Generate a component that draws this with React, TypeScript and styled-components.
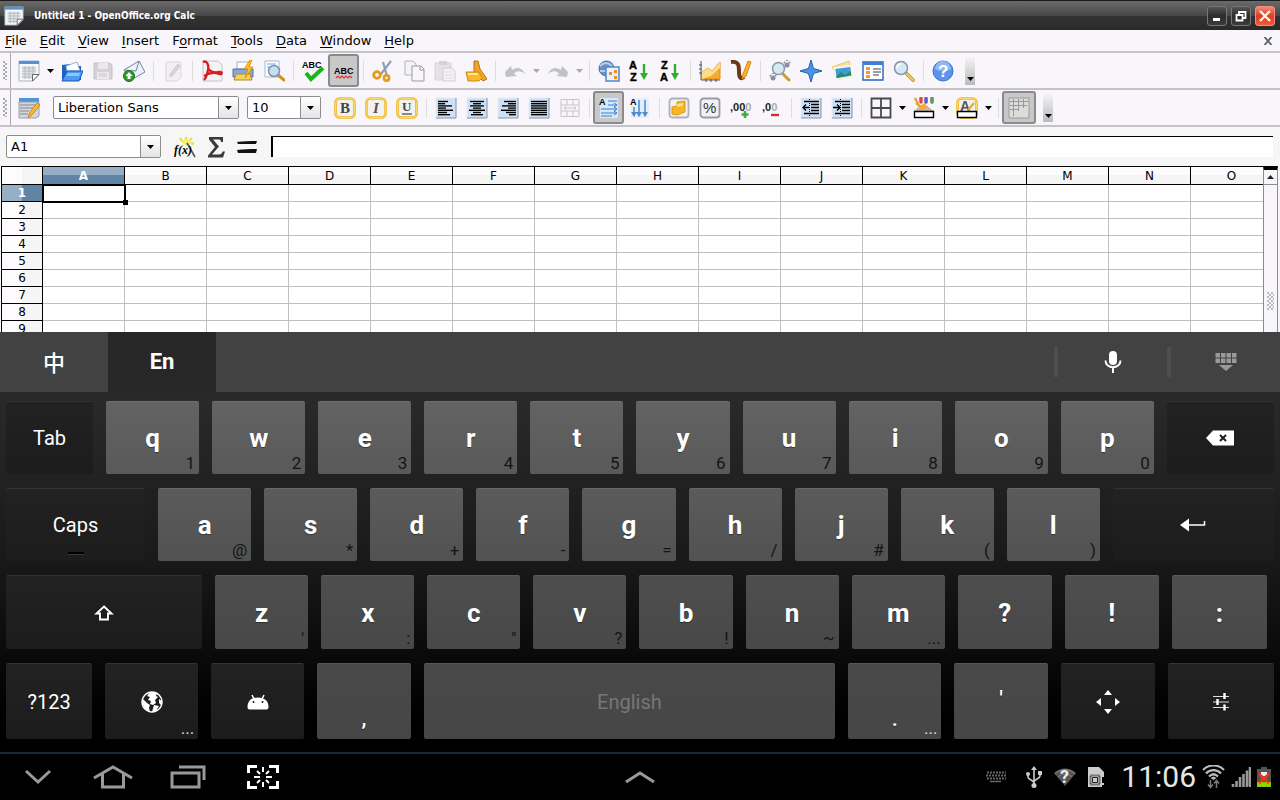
import React from "react";
import styled, { createGlobalStyle, css } from "styled-components";

const uiFont = `"DejaVu Sans", "Liberation Sans", sans-serif`;
const keyFont = `Roboto, "Noto Sans CJK SC", sans-serif`;

const GlobalStyle = createGlobalStyle`
  * { box-sizing: border-box; }
  body { margin: 0; background: #000; }
  button, input, select { font: inherit; color: inherit; margin: 0; }
  button { border: 0; padding: 0; background: none; }
  svg { display: block; flex: none; }
`;

const Screen = styled.div`
  display: flex;
  flex-direction: column;
  height: 100vh;
  overflow: hidden;
  font-family: ${uiFont};
  font-size: 13px;
  color: #000;
  background: #f8f6fa;
`;

/* ---------- window frame ---------- */

const TitleBar = styled.header`
  display: flex;
  align-items: center;
  gap: 10px;
  height: 30px;
  padding: 0 5px 0 4px;
  border-top: 1px solid #1a1a1a;
  background: linear-gradient(#6a6a6a, #484848 50%, #333 52%, #2a2a2a);
  flex: none;
`;

const Title = styled.h1`
  flex: 1;
  margin: 0;
  font-family: "DejaVu Sans Condensed", "DejaVu Sans", sans-serif;
  font-size: 10px;
  font-weight: bold;
  color: #fff;
`;

const WindowButtons = styled.div`
  display: flex;
  gap: 4px;
`;

const WindowButton = styled.button<{ $close?: boolean }>`
  display: grid;
  place-items: center;
  width: 20px;
  height: 20px;
  border: 1px solid ${(p) => (p.$close ? "#f2907f" : "#777")};
  border-radius: 3px;
  background: ${(p) =>
    p.$close ? "linear-gradient(#f08a78, #e03a22 50%, #ee5a3c)" : "linear-gradient(#555, #2c2c2c 50%, #3a3a3a)"};
`;

const MenuBar = styled.nav`
  display: flex;
  align-items: center;
  gap: 13px;
  height: 23px;
  padding: 0 7px 0 5px;
  border-bottom: 2px solid #c4c2c4;
  flex: none;
`;

const MenuItem = styled.button`
  line-height: 20px;
`;

const Accel = styled.u`
  text-underline-offset: 2px;
`;

const CloseDocument = styled.button`
  margin-left: auto;
`;

/* ---------- toolbars ---------- */

const Toolbar = styled.div`
  display: flex;
  align-items: center;
  height: 37px;
  border-bottom: 2px solid #c4c2c4;
  flex: none;
`;

const Grip = styled.span`
  align-self: stretch;
  width: 11px;
  margin-right: 2px;
  padding: 8px 3px;
  border-right: 1px solid #aaa;

  &::before {
    content: "";
    display: block;
    height: 100%;
    background:
      radial-gradient(circle at 1px 1px, #aaa 1px, transparent 1px) 0 0 / 4px 4px,
      radial-gradient(circle at 1px 1px, #aaa 1px, transparent 1px) 2px 2px / 4px 4px;
  }
`;

const ToolButton = styled.button<{ $pressed?: boolean; $wide?: boolean }>`
  display: grid;
  place-items: center;
  width: ${(p) => (p.$wide ? 34 : 31)}px;
  height: 33px;
  border-radius: 3px;
  flex: none;
  ${(p) =>
    p.$pressed &&
    css`
      border: 2px solid #8a8a8a;
      background: #c8c8c8;
    `}
`;

const DropArrow = styled.button`
  display: grid;
  place-items: center;
  width: 12px;
  height: 30px;
  flex: none;
`;

const Separator = styled.span`
  width: 1px;
  height: 20px;
  margin: 0 3px 0 4px;
  background: #dedcde;
  flex: none;
`;

const Overflow = styled.button`
  display: flex;
  align-items: flex-end;
  justify-content: center;
  width: 10px;
  height: 28px;
  margin-left: 7px;
  padding-bottom: 4px;
  background: linear-gradient(#f4f2f4, #bbb);
  flex: none;
`;

const ComboBox = styled.label<{ $width: number }>`
  position: relative;
  display: flex;
  width: ${(p) => p.$width}px;
  height: 23px;
  margin-right: 8px;
  border: 1px solid #8c8c8c;
  border-radius: 2px;
  background: #fff;
  flex: none;

  select {
    width: 100%;
    padding: 0 22px 0 4px;
    border: 0;
    outline: 0;
    appearance: none;
    background: transparent;
  }
`;

const ComboArrow = styled.span`
  position: absolute;
  top: 0;
  right: 0;
  bottom: 0;
  display: grid;
  place-items: center;
  width: 20px;
  border-left: 1px solid #8c8c8c;
  background: linear-gradient(#fff, #e4e4e4);
  pointer-events: none;
`;

const FontBoxes = styled.div`
  display: flex;
  padding-left: 9px;
`;

const FormulaBar = styled.div`
  display: flex;
  align-items: center;
  height: 39px;
  padding: 0 7px 0 6px;
  background: #f6f6f7;
  flex: none;
`;

const FormulaInput = styled.input`
  flex: 1;
  min-width: 0;
  height: 21px;
  margin-left: 9px;
  padding: 0 4px;
  border: 0;
  border-top: 1px solid #000;
  border-left: 2px solid #000;
  background: #fff;
  outline: 0;
`;

/* ---------- sheet ---------- */

const SheetArea = styled.main`
  display: flex;
  flex: 1;
  min-height: 0;
  padding: 0 2px 0 1px;
  background: #f6f6f7;
`;

const SheetClip = styled.div`
  flex: 1;
  min-width: 0;
  overflow: hidden;
  border-top: 1px solid #000;
  border-left: 1px solid #000;
  background: #fff;
`;

const Sheet = styled.table`
  width: 1271px;
  table-layout: fixed;
  border-spacing: 0;
  font-size: 12px;
  line-height: 16px;

  th, td { padding: 0; height: 17px; }
  thead th { height: 18px; }
`;

const HeadCell = styled.th<{ $active?: boolean; $row?: boolean }>`
  width: ${(p) => (p.$row ? 41 : 82)}px;
  border-right: 1px solid #000;
  border-bottom: 1px solid #000;
  font-weight: ${(p) => (p.$active ? "bold" : "normal")};
  color: ${(p) => (p.$active ? "#fff" : "#000")};
  background: ${(p) =>
    p.$active
      ? `linear-gradient(${p.$row ? "to right" : "to bottom"}, #97afc5 50%, #5f84a4 50%)`
      : `linear-gradient(${p.$row ? "to right" : "to bottom"}, #fdfbfd 50%, #f5f5f5 50%)`};
`;

const Cell = styled.td<{ $selected?: boolean }>`
  border-right: 1px solid #c0c0c0;
  border-bottom: 1px solid #c0c0c0;
  ${(p) =>
    p.$selected &&
    css`
      position: relative;
      z-index: 1;
      outline: 2px solid #000;
      outline-offset: -1px;

      &::after {
        content: "";
        position: absolute;
        right: -4px;
        bottom: -4px;
        width: 5px;
        height: 5px;
        background: #000;
      }
    `}
`;

const ScrollBar = styled.div`
  display: flex;
  flex-direction: column;
  width: 15px;
  border: 1px solid #8c8c8c;
  border-top: 4px solid #000;
  border-bottom: 0;
  background: #f8f6fa;
`;

const ScrollUp = styled.button`
  display: grid;
  place-items: center;
  height: 15px;
  border-bottom: 1px solid #8c8c8c;
`;

const ScrollGrip = styled.span`
  width: 7px;
  height: 18px;
  margin: auto auto 22px;
  background:
    radial-gradient(circle at 1px 1px, #bbb 1px, transparent 1px) 0 0 / 4px 4px,
    radial-gradient(circle at 1px 1px, #bbb 1px, transparent 1px) 2px 2px / 4px 4px;
`;

/* ---------- on-screen keyboard ---------- */

const Keyboard = styled.section`
  font-family: ${keyFont};
  color: #fff;
  flex: none;
`;

const CandidateBar = styled.div`
  display: flex;
  height: 60px;
  background: #424242;
`;

const LanguageTab = styled.button<{ $active?: boolean }>`
  width: 108px;
  padding-bottom: 2px;
  font-size: 22px;
  font-weight: ${(p) => (p.$active ? 700 : 500)};
  background: ${(p) => (p.$active ? "#272727" : "transparent")};
`;

const BarActions = styled.div`
  display: flex;
  margin-left: auto;
`;

const BarAction = styled.button`
  display: flex;
  align-items: center;
  width: 113px;

  &::before {
    content: "";
    width: 4px;
    height: 30px;
    background: #4e4e4e;
  }

  svg { margin: 0 auto; }
`;

const KeyRows = styled.div`
  display: flex;
  flex-direction: column;
  gap: 14px;
  padding: 9px 6px 13px 6px;
  background: linear-gradient(#2a2a2a, #1a1a1a 45%, #000 90%);
`;

const KeyRow = styled.div<{ $height: number; $inset?: boolean }>`
  display: flex;
  gap: 13px;
  height: ${(p) => p.$height}px;
  padding-right: ${(p) => (p.$inset ? 7 : 0)}px;
`;

const tones = [
  ["#636363", "#595959", "#707070"],
  ["#5b5b5b", "#525252", "#686868"],
  ["#4e4e4e", "#484848", "#5a5a5a"],
  ["#494949", "#464646", "#585858"],
];

const KeyCap = styled.button<{ $weight: number; $tone: number; $dark?: boolean; $small?: boolean }>`
  position: relative;
  display: flex;
  align-items: center;
  justify-content: center;
  flex: ${(p) => p.$weight} 1 0;
  min-width: 0;
  border-top: 1px solid ${(p) => (p.$dark ? "#333" : tones[p.$tone][2])};
  border-radius: 2px;
  background: ${(p) =>
    p.$dark ? "linear-gradient(#222, #1c1c1c)" : `linear-gradient(${tones[p.$tone][0]}, ${tones[p.$tone][1]})`};
  font-size: ${(p) => (p.$small ? 20 : 26)}px;
  font-weight: ${(p) => (p.$small ? 400 : 700)};
  text-shadow: ${(p) => (p.$dark ? "none" : "0 1px 1px rgba(0, 0, 0, 0.4)")};
`;

const Hint = styled.span<{ $light?: boolean }>`
  position: absolute;
  right: 4px;
  bottom: 1px;
  font-size: 17px;
  font-weight: 400;
  line-height: 20px;
  color: ${(p) => (p.$light ? "#ddd" : "#141414")};
  text-shadow: none;
`;

const LowMark = styled.span`
  align-self: flex-end;
  font-size: 22px;
  line-height: 40px;
  font-weight: 500;
`;

const HighMark = styled.span`
  padding-bottom: 6px;
  font-size: 22px;
  font-weight: 500;
`;

const SpaceLabel = styled.span`
  color: #777;
  text-shadow: none;
`;

const CapsLight = styled.span`
  position: absolute;
  left: 50%;
  bottom: 6px;
  width: 16px;
  height: 3px;
  margin-left: -8px;
  border-bottom: 1px solid #3a3a3a;
  background: #000;
`;

/* ---------- system bar ---------- */

const SystemBar = styled.footer`
  display: grid;
  grid-template-columns: 1fr auto 1fr;
  align-items: center;
  height: 48px;
  border-top: 2px solid #182838;
  background: #000;
  flex: none;
`;

const NavButtons = styled.div`
  display: flex;
`;

const NavButton = styled.button`
  display: grid;
  place-items: center;
  width: 75px;
  height: 46px;
`;

const Status = styled.div`
  display: flex;
  align-items: center;
  justify-content: flex-end;
  gap: 12px;
  padding-right: 9px;
`;

const StatusGroup = styled.div`
  display: flex;
  align-items: center;
  gap: 6px;
  margin-left: 4px;
`;

const KeyboardNotice = styled.span`
  margin-right: 8px;
`;

const Clock = styled.time`
  font-family: ${keyFont};
  font-size: 30px;
  line-height: 36px;
  color: #e6e6e6;
`;

/* ---------- icons ---------- */

const sansText = { fontFamily: "Liberation Sans, sans-serif", fontWeight: 700 };
const serifText = { fontFamily: "Liberation Serif, serif", fontWeight: 700 };

const Down = ({ color = "#000" }: { color?: string }) => (
  <svg width="7" height="4" viewBox="0 0 7 4"><path d="M0 0h7L3.5 4z" fill={color} /></svg>
);

const sheetOf = (lines: number[][]) => (
  <>
    <rect x="1" y="1" width="20" height="20" fill="#cfe0f4" />
    <path d="M1 21V1h20" fill="none" stroke="#e4edf8" />
    <path d="M21 1v20H1" fill="none" stroke="#7f93ad" />
    {lines.map(([a, b], i) => (
      <path key={i} d={`M${a} ${4.5 + i * 2.2}H${b}`} stroke="#000" strokeWidth="1.4" />
    ))}
  </>
);

const goldFrame = (
  <>
    <rect x="1.5" y="1.5" width="19" height="19" rx="4" fill="#f3f1ee" stroke="#efb52a" strokeWidth="2.6" />
    <rect x="1.5" y="1.5" width="19" height="19" rx="4" fill="none" stroke="#fbdc6a" strokeWidth="1" />
  </>
);

const icons: Record<string, React.ReactNode> = {
  calc: (
    <>
      <path d="M1 1h20v14l-6 6H1z" fill="#f6f8fa" stroke="#a9b4be" />
      <path d="M1 1h20v3H1z" fill="#4f93dc" />
      <path d="M4 6.500h14v12H4z" fill="#e2e5e8" />
      <path d="M4 8h14M4 11h14M4 14h11M4 17h10M7 6v13M11 6v13M15 6v9" stroke="#b4bcc4" fill="none" />
      <path d="M14.500 21v-6.500H21z" fill="#fff" stroke="#666" />
    </>
  ),
  open: (
    <>
      <path d="M1 5l8-1 2 2h9v14H1z" fill="#1c63c8" />
      <path d="M5 6l11-4 3 9H6z" fill="#fff" stroke="#8fb0d8" />
      <path d="M1 21l5-10h16l-4 10z" fill="#4b9af2" stroke="#1b56b4" />
      <path d="M7 13h12l-1 3H5z" fill="#8cc4fb" />
    </>
  ),
  save: (
    <>
      <path d="M2 3h16l2 2v14H2z" fill="#d4d2d4" stroke="#c4c2c4" />
      <path d="M6 3h10v6H6zM5 12h12v7H5z" fill="#ebe9eb" />
      <path d="M7 14h8M7 16h8" stroke="#c8c6c8" />
    </>
  ),
  mail: (
    <>
      <path d="M1 10L16 1l6 11-14 8z" fill="#edf1f8" stroke="#7085a6" />
      <path d="M1 10l12 1L16 1" fill="none" stroke="#7085a6" />
      <circle cx="6" cy="16" r="5.5" fill="#2f9a2a" stroke="#1c701b" />
      <path d="M6 12l3.5 4h-2v3h-3v-3h-2z" fill="#fff" />
    </>
  ),
  edit: (
    <>
      <path d="M4 2h15v15l-4 4H4z" fill="#f1eff1" stroke="#d9d7d9" />
      <path d="M8 17l1-4 7-9 2 2-7 9z" fill="#d8d6d8" stroke="#c8c6c8" />
    </>
  ),
  pdf: (
    <>
      <path d="M2 1h15l4 4v16H2z" fill="#f2f2f2" stroke="#c4c4c4" />
      <path d="M2 2c4-2 6 3 5 8-1 5-3 9-4 10M7 8c2 4 7 5 12 4 3 0 2 3-1 2-5-2-10-1-15 2" fill="none" stroke="#d81d22" strokeWidth="2.3" />
    </>
  ),
  print: (
    <>
      <path d="M5 9V2h12v7z" fill="#fff" stroke="#9bb0c8" />
      <path d="M1 9h20v8H1z" fill="#86a9d4" stroke="#51729e" />
      <path d="M4 14h14l2 6H2z" fill="#f4d25c" stroke="#a88a3a" />
      <path d="M18 0l-6 9h4l-3 9 8-11h-4l3-7z" fill="#ffc318" stroke="#dc8508" strokeWidth=".8" />
    </>
  ),
  preview: (
    <>
      <path d="M2 1h14v16H2z" fill="#fff" stroke="#9db8da" />
      <path d="M4 4h9M4 7h5" stroke="#7aa5de" />
      <path d="M15 15l6 5" stroke="#cf9322" strokeWidth="3" strokeLinecap="round" />
      <circle cx="11" cy="11" r="5.5" fill="#c4e0f0" stroke="#8191a4" strokeWidth="1.5" />
    </>
  ),
  spell: (
    <>
      <path d="M4 13l5 6L21 8" fill="none" stroke="#17b617" strokeWidth="4" />
      <text x="0" y="8" fontSize="9" style={sansText}>ABC</text>
    </>
  ),
  autospell: (
    <>
      <text x="1" y="14" fontSize="9" style={sansText}>ABC</text>
      <path d="M3 18l2-2 2 2 2-2 2 2 2-2 2 2 2-2 2 2" fill="none" stroke="#d33" strokeWidth="1.2" />
    </>
  ),
  cut: (
    <>
      <path d="M19 1L9 14M11 2l4 14" stroke="#8e9fb3" strokeWidth="2.2" />
      <circle cx="5" cy="15" r="3.3" fill="none" stroke="#e6981a" strokeWidth="2.8" />
      <circle cx="14.5" cy="18" r="2.6" fill="none" stroke="#e6981a" strokeWidth="2.6" />
    </>
  ),
  copy: (
    <>
      <path d="M2 1h8l3 3v11H2z" fill="#f4f2f4" stroke="#b4b4b4" />
      <path d="M9 6h9l3 3v12H9z" fill="#f8f6f8" stroke="#9c9c9c" />
      <path d="M17 6v4h4" fill="none" stroke="#9c9c9c" />
    </>
  ),
  paste: (
    <>
      <path d="M1 3h16v17H1z" fill="#e4e2e4" stroke="#d6d4d6" />
      <path d="M5 1h8v4H5z" fill="#d4d2d4" />
      <path d="M9 8h9l3 3v10H9z" fill="#f4f2f4" stroke="#cecccc" />
      <path d="M11 12h7M11 15h8M11 18h8" stroke="#dcdadc" />
    </>
  ),
  brush: (
    <>
      <path d="M9 1h4l2 8 7 10-4 2-9-9z" fill="#f2a429" stroke="#b87410" />
      <path d="M1 12h13l3 6-3 3H3z" fill="#f9b92d" stroke="#d38b12" />
      <path d="M3 14h10" stroke="#ffe69a" strokeWidth="2" />
    </>
  ),
  undo: <path d="M1 12l6-6 1 4c5-4 11-2 13 4-4-3-8-4-11 0l3 2-11 1z" fill="#c2c2c6" />,
  redo: <path d="M21 12l-6-6-1 4C9 6 3 8 1 14c4-3 8-4 11 0l-3 2 11 1z" fill="#c2c2c6" />,
  link: (
    <>
      <circle cx="8.5" cy="8.5" r="7.5" fill="#6d8fc4" stroke="#4b6a9c" />
      <path d="M2 6c4-4 8-4 12 0M2 11h6" stroke="#b5cdec" strokeWidth="2" fill="none" />
      <path d="M8 7h13v14H8z" fill="#e8f2fc" stroke="#4f88cc" strokeWidth="1.5" />
      <path d="M11 12h3v3h-3zM16 10h3v3h-3zM16 16h3v3h-3z" fill="#f08c24" />
    </>
  ),
  az: (
    <>
      <text x="0" y="9" fontSize="11" style={sansText} stroke="#000" strokeWidth=".4">A</text>
      <text x="1" y="21" fontSize="11" style={sansText} stroke="#000" strokeWidth=".4">Z</text>
      <path d="M15 4v11" stroke="#2fae2f" strokeWidth="2.4" /><path d="M11 13h8l-4 7z" fill="#2fae2f" />
    </>
  ),
  za: (
    <>
      <text x="1" y="9" fontSize="11" style={sansText} stroke="#000" strokeWidth=".4">Z</text>
      <text x="0" y="21" fontSize="11" style={sansText} stroke="#000" strokeWidth=".4">A</text>
      <path d="M15 4v11" stroke="#2fae2f" strokeWidth="2.4" /><path d="M11 13h8l-4 7z" fill="#2fae2f" />
    </>
  ),
  chart: (
    <>
      <path d="M3 19V12l6-4 4 3 8-9v17z" fill="#f9a92c" stroke="#e58f12" />
      <path d="M3 19V12l6-4 4 3 8-9v6l-9 8z" fill="#fddb8c" />
      <path d="M2 1v19h19M0 5h3M0 9h3M0 13h3M7 19v3M12 19v3M17 19v3" stroke="#555" fill="none" />
    </>
  ),
  draw: (
    <>
      <path d="M1 2c8-1 8 4 8 9 0 6 1 9 5 6" fill="none" stroke="#6a3a18" strokeWidth="4" />
      <path d="M12 19l1-5 5-13 3 1-5 14z" fill="#fbb52c" stroke="#d8830f" />
    </>
  ),
  find: (
    <>
      <circle cx="4" cy="18" r="2.5" fill="#8a8ea8" /><circle cx="18" cy="5" r="2.5" fill="#8a8ea8" />
      <path d="M1 15l1 1M4 13v1M7 15l-1 1M15 2l1 1M18 0v1M21 2l-1 1" stroke="#8a8ea8" strokeWidth="2" />
      <path d="M14 14l6 6" stroke="#d59a28" strokeWidth="3" strokeLinecap="round" />
      <circle cx="9.5" cy="8.5" r="6" fill="#d4eaf4" stroke="#8797a5" strokeWidth="1.5" />
    </>
  ),
  star: (
    <path d="M11 0l2.5 8.5L22 11l-8.5 2.5L11 22l-2.5-8.500L0 11l8.500-2.500z" fill="#4a94ea" stroke="#2260b0" />
  ),
  gallery: (
    <>
      <path d="M1 7L18 1l3 10-13 9z" fill="#fbe38c" stroke="#e0cc70" />
      <path d="M4 7h17v11H4z" fill="#3e9bdc" stroke="#f4f4f4" strokeWidth="2" transform="rotate(-8 12 13)" />
      <path d="M5 17l5-5 4 3 6-4v4l-14 3z" fill="#2f8a5a" />
    </>
  ),
  source: (
    <>
      <path d="M1 2h20v18H1z" fill="#fff" stroke="#2b62b8" strokeWidth="1.4" />
      <path d="M1 2h20v3H1z" fill="#3f7fd8" />
      <path d="M4 7h4v3H4zM4 11h4v3H4zM4 15h4v3H4z" fill="#f09a30" />
      <path d="M11 9h8M11 12h8M11 15h6" stroke="#345" />
    </>
  ),
  zoom: (
    <>
      <path d="M14 14l6 6" stroke="#c88a1a" strokeWidth="3.6" strokeLinecap="round" />
      <path d="M14 14l6 6" stroke="#f7cf5e" strokeWidth="1.8" strokeLinecap="round" />
      <circle cx="8" cy="8" r="6.5" fill="#d4eaf4" stroke="#8797a5" strokeWidth="1.5" />
      <path d="M4 8a4 4 0 0 1 4-4" fill="none" stroke="#fff" strokeWidth="1.6" />
    </>
  ),
  help: (
    <>
      <circle cx="11" cy="11" r="10" fill="#5b94ee" stroke="#3c6fc8" />
      <path d="M3 9a8 8 0 0 1 16 0c-5 3-11 3-16 0z" fill="#8db8f8" />
      <text x="6" y="17" fontSize="17" fill="#fff" style={sansText}>?</text>
    </>
  ),
  styles: (
    <>
      <path d="M1 1h20v4H1z" fill="#4f93dc" />
      <path d="M1 5h20v14l-3 2H1z" fill="#d4d8de" stroke="#98a0aa" />
      <path d="M2 8h17M2 11h15M2 14h9M2 17h8" stroke="#7c8590" />
      <path d="M10 21l2-6 7-9 3 2-8 10z" fill="#fbb832" stroke="#cf8a12" />
    </>
  ),
  bold: (<>{goldFrame}<text x="6" y="16" fontSize="15" fill="#444" style={serifText}>B</text></>),
  italic: (<>{goldFrame}<text x="8" y="16" fontSize="15" fill="#555" style={{ ...serifText, fontStyle: "italic" }}>I</text></>),
  underline: (<>{goldFrame}<text x="6" y="14" fontSize="13" fill="#444" style={serifText}>U</text><path d="M6 17h10" stroke="#444" strokeWidth="1.2" /></>),
  left: sheetOf([[3, 13], [3, 10], [3, 17], [3, 11], [3, 18], [3, 12], [3, 15]]),
  center: sheetOf([[4, 18], [7, 15], [4, 18], [7, 15], [3, 19], [7, 15], [5, 17]]),
  right: sheetOf([[7, 19], [11, 19], [5, 19], [11, 19], [4, 19], [9, 19], [12, 19]]),
  justify: sheetOf([[3, 19], [3, 19], [3, 19], [3, 19], [3, 19], [3, 19], [3, 19]]),
  merge: (
    <path d="M2 2.500h18v17H2zM2 8h18M2 14h18M8 2v6M14 2v6M8 14v6M14 14v6M5 11h12M7 9l-2 2 2 2M15 9l2 2-2 2" fill="none" stroke="#c6c4c6" />
  ),
  ltr: (
    <>
      <path d="M2 1h18v20H2z" fill="#d9e8f8" />
      <path d="M10 4h9M10 8h9M3 12h15M3 16h15M3 19h11" stroke="#6aa4de" strokeWidth="1.6" />
      <path d="M16 6l3 2-3 2M16 10l3 2-3 2M16 14l3 2-3 2" fill="none" stroke="#3d7cc0" />
      <text x="1" y="8" fontSize="9" style={sansText}>A</text>
    </>
  ),
  ttb: (
    <>
      <path d="M2 1h18v20H2z" fill="#e4eefa" />
      <path d="M5 10v9M10 3v16M16 3v16" stroke="#6aa4de" strokeWidth="2" />
      <path d="M2 15l3 5 3-5M7 15l3 5 3-5M13 15l3 5 3-5" fill="#4f8ccc" />
      <text x="1" y="8" fontSize="9" style={sansText}>A</text>
    </>
  ),
  currency: (
    <>
      <rect x="1.5" y="1.5" width="19" height="19" rx="3" fill="#f2f2f4" stroke="#b0b0ba" strokeWidth="1.8" />
      <path d="M9 5l8-1v11l-8 3-5-1v-7l5-1z" fill="#f9b422" stroke="#e09a18" />
      <path d="M9 7l6-1v3l-6 1z" fill="#ffe07a" />
    </>
  ),
  percent: (
    <>
      <rect x="1.5" y="1.5" width="19" height="19" rx="3" fill="#f2f2f4" stroke="#9a9aa6" strokeWidth="1.8" />
      <text x="4" y="16" fontSize="15" fill="#333" style={{ fontFamily: "Liberation Sans, sans-serif" }}>%</text>
    </>
  ),
  addDec: (
    <>
      <text x="0" y="14" fontSize="11" style={sansText} fill="#222">,00<tspan fill="#aaa">0</tspan></text>
      <path d="M15 14v7M11.500 17.500h7" stroke="#3fae3f" strokeWidth="2.6" />
    </>
  ),
  delDec: (
    <>
      <text x="1" y="14" fontSize="11" style={sansText} fill="#222">,0<tspan fill="#aaa">0</tspan></text>
      <path d="M10 18h8" stroke="#d33030" strokeWidth="2.4" />
    </>
  ),
  outdent: (
    <>
      {sheetOf([])}
      <path d="M4 4.500h15M11 7.500h8M11 10.500h8M11 13.500h8M4 16.500h15" stroke="#000" strokeWidth="1.4" />
      <path d="M9.500 2v18" stroke="#000" strokeDasharray="1 1" />
      <path d="M3 10.500h6M6 7.500l-3 3 3 3" fill="none" stroke="#000" strokeWidth="1.4" />
    </>
  ),
  indent: (
    <>
      {sheetOf([])}
      <path d="M4 4.500h15M11 7.500h8M11 10.500h8M11 13.500h8M4 16.500h15" stroke="#000" strokeWidth="1.4" />
      <path d="M9.500 2v18" stroke="#000" strokeDasharray="1 1" />
      <path d="M2 10.500h7M6 7.500l3 3-3 3" fill="none" stroke="#000" strokeWidth="1.4" />
    </>
  ),
  borders: <path d="M1.500 1.500h19v19h-19zM11 1v20M1 11h20" fill="none" stroke="#4a4a4a" strokeWidth="1.8" />,
  fill: (
    <>
      <path d="M2 1l4 8M3 6l5 4" stroke="#f0a030" strokeWidth="2.4" />
      <path d="M8 1v4M13 1v4M19 1v4" strokeWidth="3.4" strokeLinecap="round" stroke="#e04848" />
      <path d="M13 2v3" strokeWidth="3" strokeLinecap="round" stroke="#4868d8" />
      <path d="M19 2v3" strokeWidth="3" strokeLinecap="round" stroke="#48b050" />
      <path d="M2 14l9-8 9 8z" fill="#f6a838" /><path d="M1 14l4-4 4 3 6-3 6 4z" fill="#b8bcc4" opacity=".8" />
      <path d="M1.500 14.500h19v6h-19z" fill="#fff" stroke="#000" strokeWidth="1.4" />
    </>
  ),
  fontColor: (
    <>
      {goldFrame}
      <text x="4" y="14" fontSize="14" fill="#555" style={sansText}>A</text>
      <path d="M12 13l6-7" stroke="#e8a824" strokeWidth="2" />
      <path d="M1.500 14.500h19v6h-19z" fill="#fff" stroke="#000" strokeWidth="1.4" />
    </>
  ),
  grid: (
    <>
      <path d="M1 1h20v20H1z" fill="#dcdcda" stroke="#9a9a98" />
      <path d="M2 4.500h18M2 8.500h17M2 12.500h9M5.500 2v17M10.500 2v12M15.500 2v9" stroke="#999" />
    </>
  ),
  wizard: (
    <>
      <path d="M6 2l2 3M12 1v4M18 2l-3 3M20 8l-3-1M9 7l1-2" stroke="#f0dc48" strokeWidth="2.4" />
      <circle cx="13" cy="6" r="3.5" fill="#f8ec70" />
      <path d="M13 7l8 14" stroke="#555" strokeWidth="1.6" />
      <text x="0" y="18" fontSize="12" style={{ ...serifText, fontStyle: "italic" }}>f(x)</text>
    </>
  ),
  sum: <path d="M4 1h14v5h-2c0-2-1-2.500-3-2.500H8l6 7-7 8h7c2 0 3-1 3.500-3H20l-2 6H3v-2l7-8.500-6-7.500z" fill="#3a3a3a" />,
  equals: <path d="M1 6c6-1 14-1 20-1l-1 3H2zM1 14c7-1 13-1 20-1l-1 4H2z" fill="#111" />,
};

const Icon = ({ name, size = 22 }: { name: string; size?: number }) => (
  <svg width={size} height={size} viewBox="0 0 22 22" aria-hidden="true">{icons[name]}</svg>
);

/* ---------- data ---------- */

interface ToolDef { icon: string; pressed?: boolean; wide?: boolean }
type Tool = string | ToolDef;

const standardTools: Tool[] = [
  "calc", "v", "open", "save", "mail", "|", "edit", "|", "pdf", "print", "preview", "|",
  "spell", { icon: "autospell", pressed: true }, "|", "cut", "copy", "paste", "brush", "|",
  "undo", "v-", "redo", "v-", "|", "link", "az", "za", "|", "chart", "draw", "|",
  "find", "star", "gallery", "source", "zoom", "|", "help",
];

const formatTools: Tool[] = [
  "bold", "italic", "underline", "|", "left", "center", "right", "justify", "merge", "|",
  { icon: "ltr", pressed: true }, "ttb", "|", "currency", "percent", "addDec", "delDec", "|",
  "outdent", "indent", "|", "borders", "v", "fill", "v", "fontColor", "v", "|",
  { icon: "grid", pressed: true, wide: true },
];

const Tools = ({ items }: { items: Tool[] }) => (
  <>
    {items.map((item, i) => {
      if (item === "|") return <Separator key={i} />;
      if (item === "v" || item === "v-")
        return (
          <DropArrow key={i} aria-label="More options" disabled={item === "v-"}>
            <Down color={item === "v" ? "#000" : "#aaa"} />
          </DropArrow>
        );
      const tool: ToolDef = typeof item === "string" ? { icon: item } : item;
      return (
        <ToolButton key={i} $pressed={tool.pressed} $wide={tool.wide} aria-label={tool.icon}>
          <Icon name={tool.icon} />
        </ToolButton>
      );
    })}
  </>
);

const Combo = ({ label, value, width }: { label: string; value: string; width: number }) => (
  <ComboBox $width={width}>
    <select aria-label={label} defaultValue={value}><option>{value}</option></select>
    <ComboArrow><Down /></ComboArrow>
  </ComboBox>
);

interface KeyDef {
  label?: string;
  hint?: string;
  weight?: number;
  dark?: boolean;
  small?: boolean;
  lightHint?: boolean;
  name?: string;
  content?: React.ReactNode;
}

const letters = (chars: string, hints: string[]): KeyDef[] =>
  chars.split("").map((label, i) => ({ label, hint: hints[i] }));

const rows: { height: number; inset?: boolean; keys: KeyDef[] }[] = [
  {
    height: 73,
    keys: [
      { label: "Tab", weight: 87, dark: true, small: true },
      ...letters("qwertyuiop", "1234567890".split("")),
      {
        name: "Backspace", weight: 107, dark: true,
        content: (
          <svg width="28" height="16" viewBox="0 0 28 16">
            <path d="M0 8l7-7.500h21v15H7z" fill="#fff" /><path d="M14 5l6 6M20 5l-6 6" stroke="#1e1e1e" strokeWidth="2" />
          </svg>
        ),
      },
    ],
  },
  {
    height: 73,
    keys: [
      { label: "Caps", weight: 139, dark: true, small: true, content: <CapsLight /> },
      ...letters("asdfghjkl", ["@", "*", "+", "-", "=", "/", "#", "(", ")"]),
      {
        name: "Enter", weight: 161, dark: true,
        content: (
          <svg width="26" height="14" viewBox="0 0 26 14">
            <path d="M0 7l9-6.500v13z" fill="#fff" /><path d="M8 7h16.500V3" fill="none" stroke="#fff" strokeWidth="1.5" />
          </svg>
        ),
      },
    ],
  },
  {
    height: 74,
    inset: true,
    keys: [
      {
        name: "Shift", weight: 196, dark: true,
        content: (
          <svg width="20" height="16" viewBox="0 0 20 16">
            <path d="M10 1.500l7.500 7H14V14.500H6V8.500H2.500z" fill="none" stroke="#fff" strokeWidth="1.9" />
          </svg>
        ),
      },
      ...letters("zxcvbnm", ["'", ":", "\"", "?", "!", "~", "..."]),
      { label: "?", weight: 94 }, { label: "!", weight: 94 }, { label: ":", weight: 95 },
    ],
  },
  {
    height: 76,
    keys: [
      { label: "?123", weight: 86, dark: true, small: true },
      {
        name: "Language", dark: true, hint: "...", lightHint: true,
        content: (
          <svg width="22" height="22" viewBox="0 0 22 22">
            <circle cx="11" cy="11" r="10" fill="#1e1e1e" stroke="#fff" strokeWidth="1.4" />
            <path d="M9 1l7 1-1 3 2 1-3 3 1 3-3 2-3-1 1-3-3-1 2-3-3-1zM2 8l4 4 3 2-1 3 1 4-5-3-3-6zM13 14l5 1-3 5-4 1zM18 8l3 2-1 4-2-2z" fill="#fff" />
          </svg>
        ),
      },
      {
        name: "Android", dark: true,
        content: (
          <svg width="22" height="16" viewBox="0 0 22 16">
            <path d="M5 1l2 4M17 1l-2 4" stroke="#fff" strokeWidth="1.5" />
            <path d="M.5 13c0-6 4-9.500 10.500-9.500S21.500 7 21.500 13c0 2-1 2.500-3 2.500h-15c-2 0-3-.5-3-2.500z" fill="#fff" />
            <circle cx="6.5" cy="8" r="1" fill="#1e1e1e" /><circle cx="15.5" cy="8" r="1" fill="#1e1e1e" />
          </svg>
        ),
      },
      { name: "Comma", content: <LowMark>,</LowMark> },
      { name: "Space", weight: 411, small: true, content: <SpaceLabel>English</SpaceLabel> },
      { name: "Period", hint: "...", lightHint: true, content: <LowMark>.</LowMark> },
      { name: "Apostrophe", content: <HighMark>'</HighMark> },
      {
        name: "Move cursor", weight: 94, dark: true,
        content: (
          <svg width="24" height="24" viewBox="0 0 24 24">
            <path d="M12 0l4 5H8zM12 24l4-5H8zM0 12l5-4v8zM24 12l-5-4v8z" fill="#fff" />
          </svg>
        ),
      },
      {
        name: "Settings", weight: 106, dark: true,
        content: (
          <svg width="18" height="18" viewBox="0 0 18 18">
            <path d="M1 3.500h16M1 9h16M1 14.500h16" stroke="#ddd" strokeWidth="1.2" />
            <path d="M12.500 0v6M5.500 6v6M12.500 11.500v6" stroke="#fff" strokeWidth="2.4" />
          </svg>
        ),
      },
    ],
  },
];

const menus = ["File", "Edit", "View", "Insert", "Format", "Tools", "Data", "Window", "Help"];
const accelIndex: Record<string, number> = { Format: 1 };
const columns = "ABCDEFGHIJKLMNO".split("");
const rowNumbers = [1, 2, 3, 4, 5, 6, 7, 8, 9];

export default function App() {
  return (
    <Screen>
      <GlobalStyle />
      <TitleBar>
        <Icon name="calc" size={20} />
        <Title>Untitled 1 - OpenOffice.org Calc</Title>
        <WindowButtons>
          <WindowButton aria-label="Minimize">
            <svg width="12" height="12"><path d="M2 9.500h7" stroke="#fff" strokeWidth="3" /></svg>
          </WindowButton>
          <WindowButton aria-label="Restore">
            <svg width="12" height="12"><path d="M1.500 5h6v5.500h-6zM4 4.500V2h6.500v6H8" fill="none" stroke="#fff" strokeWidth="1.8" /></svg>
          </WindowButton>
          <WindowButton $close aria-label="Close">
            <svg width="12" height="12"><path d="M1 1l10 10M11 1L1 11" stroke="#fff6e0" strokeWidth="2.4" /></svg>
          </WindowButton>
        </WindowButtons>
      </TitleBar>

      <MenuBar>
        {menus.map((m) => {
          const at = accelIndex[m] ?? 0;
          return (
            <MenuItem key={m}>
              {m.slice(0, at)}<Accel>{m[at]}</Accel>{m.slice(at + 1)}
            </MenuItem>
          );
        })}
        <CloseDocument aria-label="Close document">
          <svg width="10" height="8" viewBox="0 0 10 8"><path d="M1.500 0l7 8M8.500 0l-7 8" stroke="#56606e" strokeWidth="1.8" /></svg>
        </CloseDocument>
      </MenuBar>

      <Toolbar role="toolbar" aria-label="Standard">
        <Grip />
        <Tools items={standardTools} />
        <Overflow aria-label="More tools"><Down /></Overflow>
      </Toolbar>

      <Toolbar role="toolbar" aria-label="Formatting">
        <Grip />
        <Tools items={["styles"]} />
        <FontBoxes>
          <Combo label="Font name" value="Liberation Sans" width={186} />
          <Combo label="Font size" value="10" width={74} />
        </FontBoxes>
        <Tools items={formatTools} />
        <Overflow aria-label="More tools"><Down /></Overflow>
      </Toolbar>

      <FormulaBar>
        <Combo label="Name box" value="A1" width={155} />
        <Tools items={["wizard", "sum", "equals"]} />
        <FormulaInput aria-label="Formula" />
      </FormulaBar>

      <SheetArea>
        <SheetClip>
          <Sheet>
            <thead>
              <tr>
                <HeadCell $row />
                {columns.map((c) => <HeadCell key={c} $active={c === "A"}>{c}</HeadCell>)}
              </tr>
            </thead>
            <tbody>
              {rowNumbers.map((n) => (
                <tr key={n}>
                  <HeadCell scope="row" $row $active={n === 1}>{n}</HeadCell>
                  {columns.map((c) => <Cell key={c} $selected={n === 1 && c === "A"} />)}
                </tr>
              ))}
            </tbody>
          </Sheet>
        </SheetClip>
        <ScrollBar>
          <ScrollUp aria-label="Scroll up">
            <svg width="7" height="4"><path d="M0 4h7L3.500 0z" fill="#223" /></svg>
          </ScrollUp>
          <ScrollGrip />
        </ScrollBar>
      </SheetArea>

      <Keyboard aria-label="On-screen keyboard">
        <CandidateBar>
          <LanguageTab>中</LanguageTab>
          <LanguageTab $active>En</LanguageTab>
          <BarActions>
            <BarAction aria-label="Voice input">
              <svg width="18" height="24" viewBox="0 0 18 24">
                <rect x="5" y="1" width="8" height="14" rx="4" fill="#fff" />
                <path d="M1.500 10.500c0 9 15 9 15 0M9 17v6" fill="none" stroke="#fff" strokeWidth="2" />
              </svg>
            </BarAction>
            <BarAction aria-label="Hide keyboard">
              <svg width="22" height="20" viewBox="0 0 22 20">
                {[0, 5.5].map((y) => [0, 5.5, 11, 16.5].map((x) => (
                  <rect key={`${x}-${y}`} x={x + 0.5} y={y + 1} width="4.5" height="4.5" fill="#999" />
                )))}
                <path d="M4 13h14l-7 6z" fill="#999" />
              </svg>
            </BarAction>
          </BarActions>
        </CandidateBar>
        <KeyRows>
          {rows.map((row, r) => (
            <KeyRow key={r} $height={row.height} $inset={row.inset}>
              {row.keys.map((k, i) => (
                <KeyCap key={i} $tone={r} $weight={k.weight ?? 93} $dark={k.dark} $small={k.small} aria-label={k.name}>
                  {k.label}
                  {k.content}
                  {k.hint && <Hint $light={k.lightHint}>{k.hint}</Hint>}
                </KeyCap>
              ))}
            </KeyRow>
          ))}
        </KeyRows>
      </Keyboard>

      <SystemBar>
        <NavButtons>
          <NavButton aria-label="Back">
            <svg width="28" height="16"><path d="M2 2l12 11L26 2" fill="none" stroke="#999" strokeWidth="3" /></svg>
          </NavButton>
          <NavButton aria-label="Home">
            <svg width="40" height="24"><path d="M1 13L20 2l19 11M9.500 9v13h21V9" fill="none" stroke="#999" strokeWidth="3" /></svg>
          </NavButton>
          <NavButton aria-label="Recent apps">
            <svg width="36" height="24"><path d="M2 8h27v14H2zM9 2h25v13" fill="none" stroke="#999" strokeWidth="3" /></svg>
          </NavButton>
          <NavButton aria-label="Screenshot">
            <svg width="32" height="24" viewBox="0 0 32 24">
              <path d="M1.500 8V1.500H10M22 1.500h8.500V8M30.500 16v6.500H22M10 22.500H1.500V16" fill="none" stroke="#fff" strokeWidth="3" />
              <path d="M16 2v5M16 17v5M7 12h6M19 12h6M10 6l3 3M22 6l-3 3M10 18l3-3M22 18l-3-3" stroke="#fff" strokeWidth="2" />
            </svg>
          </NavButton>
        </NavButtons>
        <NavButton aria-label="Open tray">
          <svg width="30" height="14"><path d="M1 12L15 3l14 9" fill="none" stroke="#999" strokeWidth="3" /></svg>
        </NavButton>
        <Status>
          <KeyboardNotice>
            <svg width="20" height="12" viewBox="0 0 20 12">
              <path d="M1 1.500h19M0 4.500h20M1 7.500h19" stroke="#666" strokeWidth="2" strokeDasharray="2 1" />
              <path d="M4 10.500h11" stroke="#666" strokeWidth="1.5" />
            </svg>
          </KeyboardNotice>
          <svg width="16" height="22" viewBox="0 0 16 22">
            <path d="M8 3v17M2 8v3c0 3 6 3 6 6M14 7v3c0 3-6 3-6 6" fill="none" stroke="#ccc" strokeWidth="1.6" />
            <path d="M8 0l3 4H5z" fill="#ccc" /><circle cx="8" cy="19.5" r="2.5" fill="#ccc" />
            <circle cx="2" cy="8" r="2" fill="#ccc" /><path d="M12 5h4v4h-4z" fill="#ccc" />
          </svg>
          <svg width="22" height="20" viewBox="0 0 22 20">
            <path d="M0 6c6-6 16-6 22 0L11 19z" fill="#555" />
            <path d="M1 7c6-6 14-6 20 0M4 10c4-4 10-4 14 0" fill="none" stroke="#888" />
            <text x="6" y="16" fontSize="18" fill="#eee" style={{ fontFamily: keyFont, fontWeight: 700 }}>?</text>
          </svg>
          <svg width="17" height="22" viewBox="0 0 17 22">
            <path d="M0 1h11l5 5v15H0z" fill="#ccc" />
            <path d="M2.500 9.500h9v9h-9z" fill="none" stroke="#222" strokeDasharray="1 1" strokeWidth="2" />
            <path d="M4.500 11.500h5v5h-5z" fill="#ccc" stroke="#222" />
            <path d="M15 11v6M15 19v2" stroke="#000" strokeWidth="2" />
          </svg>
          <StatusGroup>
            <Clock>11:06</Clock>
            <svg width="23" height="24" viewBox="0 0 23 24">
              <path d="M1 5c6-6 15-6 21 0M4 8.500c4-4.500 11-4.500 15 0M7 11.500c3-3 6-3 9 0" fill="none" stroke="#bbb" strokeWidth="2.2" />
              <path d="M8.500 13L11.500 11.500l3 1.500-3 2z" fill="#bbb" />
              <path d="M8.500 15v7M6 19.500l2.500 3 2.500-3M14.500 23v-7M12 18.500l2.500-3 2.500 3" fill="none" stroke="#777" strokeWidth="1.5" />
            </svg>
            <svg width="20" height="22" viewBox="0 0 20 22">
              <path d="M2 21v-3M5.500 21v-6M9 21v-10M12.500 21V8M16 21V4.500M19 21V1" stroke="#999" strokeWidth="2.6" />
            </svg>
            <svg width="14" height="22" viewBox="0 0 14 22">
              <path d="M4 1h6v2h4v18H0V3h4z" fill="#555" /><path d="M0 16h14v5H0z" fill="#8ad400" />
              <path d="M4 6h6v4H4z" fill="#eee" /><path d="M2 8l10 9M12 8L2 17" stroke="#f03818" strokeWidth="2.6" />
            </svg>
          </StatusGroup>
        </Status>
      </SystemBar>
    </Screen>
  );
}
